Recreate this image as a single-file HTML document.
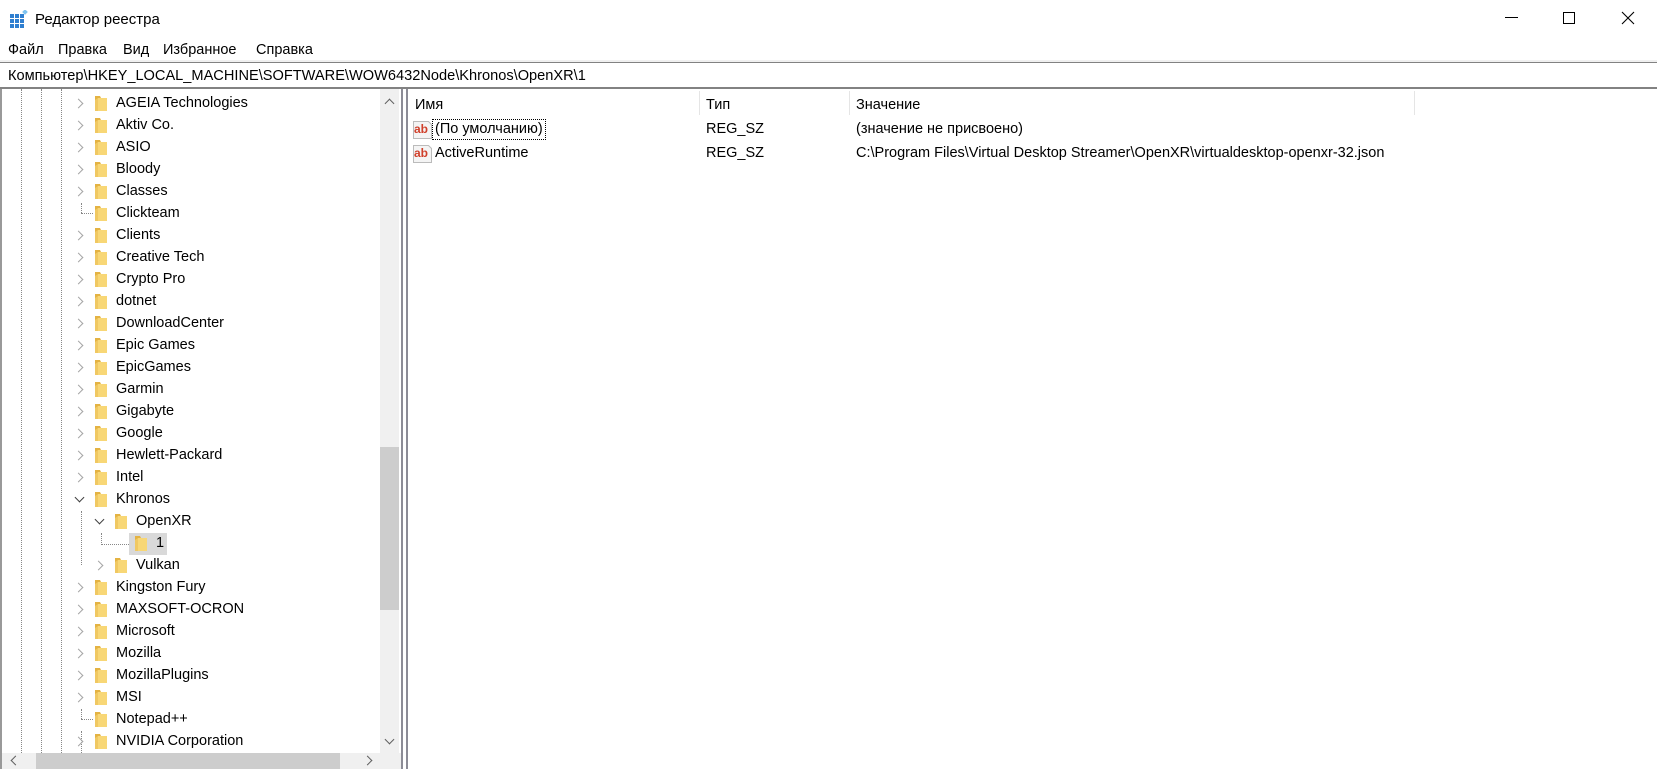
<!DOCTYPE html>
<html><head><meta charset="utf-8"><style>
*{margin:0;padding:0;box-sizing:border-box}
body{width:1657px;height:769px;overflow:hidden;background:#fff;font-family:"Liberation Sans",sans-serif;font-size:14.5px;color:#000;position:relative}
.a{position:absolute;white-space:nowrap}
.w{position:absolute;left:0;width:1657px;height:0}
.r{position:absolute;height:22px;line-height:22px;white-space:nowrap}
.chev{position:absolute;width:7px;height:7px;border-right:1.5px solid #a6a6a6;border-bottom:1.5px solid #a6a6a6;transform:rotate(-45deg)}
.dn{border-color:#404040;transform:rotate(45deg)}
.fd{position:absolute;width:12px;height:16px}
.vd{position:absolute;width:0;border-left:1px dotted #888}
.hd{position:absolute;height:0;border-top:1px dotted #888}
</style></head><body>
<svg class="a" style="left:10px;top:10px" width="18" height="18" viewBox="0 0 18 18">
<g fill="#2f7fd0"><rect x="0" y="4" width="4" height="4"/><rect x="5" y="4" width="4" height="4"/><rect x="10" y="4" width="4" height="4"/><rect x="0" y="9" width="4" height="4"/><rect x="5" y="9" width="4" height="4"/><rect x="10" y="9" width="4" height="4"/><rect x="0" y="14" width="4" height="4"/><rect x="5" y="14" width="4" height="4"/><rect x="10" y="14" width="4" height="4"/></g>
<rect x="13" y="0" width="4" height="4" fill="#7fc3f0" transform="rotate(45 15 2)"/></svg>
<div class="a" style="left:35px;top:11px;font-size:15px">Редактор реестра</div>
<div class="a" style="left:1505px;top:17px;width:13px;border-top:1px solid #000"></div>
<div class="a" style="left:1563px;top:12px;width:12px;height:12px;border:1px solid #000"></div>
<svg class="a" style="left:1621px;top:11px" width="14" height="14"><path d="M1 1L13 13M13 1L1 13" stroke="#000" stroke-width="1.1"/></svg>
<div class="a" style="left:8px;top:42px">Файл</div>
<div class="a" style="left:58px;top:42px">Правка</div>
<div class="a" style="left:123px;top:42px">Вид</div>
<div class="a" style="left:163px;top:42px">Избранное</div>
<div class="a" style="left:256px;top:42px">Справка</div>
<div class="a" style="left:0;top:60px;width:1657px;height:2px;background:#f0f0f0"></div>
<div class="a" style="left:0;top:62px;width:1657px;height:1px;background:#828282"></div>
<div class="a" style="left:0;top:87px;width:1657px;height:2px;background:#828282"></div>
<div class="a" style="left:8px;top:68px;font-size:14.6px">Компьютер\HKEY_LOCAL_MACHINE\SOFTWARE\WOW6432Node\Khronos\OpenXR\1</div>
<div class="a" style="left:0;top:89px;width:2px;height:680px;background:#999"></div>
<div class="vd" style="left:21px;top:89px;height:664px"></div>
<div class="vd" style="left:41px;top:89px;height:664px"></div>
<div class="vd" style="left:61px;top:89px;height:664px"></div>
<div class="w" style="top:3px">
<div class="vd" style="left:81px;top:508px;height:54px"></div>
<div class="vd" style="left:81px;top:728px;height:22px"></div>
<div class="vd" style="left:101px;top:530px;height:12px"></div>
<div class="hd" style="left:101px;top:541px;width:30px"></div>
<div class="hd" style="left:81px;top:210px;width:12px"></div>
<div class="vd" style="left:81px;top:200px;height:10px"></div>
<div class="hd" style="left:81px;top:716px;width:12px"></div>
<div class="vd" style="left:81px;top:706px;height:10px"></div>
<div class="a" style="left:129px;top:530px;width:38px;height:22px;background:#d9d9d9"></div>
<svg width="0" height="0" style="position:absolute"><defs><g id="f"><path d="M0 1h5l1 2h6v13H0z" fill="#e4b343"/><path d="M3 3h9v13H3z" fill="#f8d776"/><path d="M3 3l-3 2v11h3z" fill="#f0c862"/></g></defs></svg>
<div class="chev" style="left:75px;top:97px"></div><svg class="fd" style="left:95px;top:92px"><use href="#f"/></svg><div class="r" style="left:116px;top:89px">AGEIA Technologies</div>
<div class="chev" style="left:75px;top:119px"></div><svg class="fd" style="left:95px;top:114px"><use href="#f"/></svg><div class="r" style="left:116px;top:111px">Aktiv Co.</div>
<div class="chev" style="left:75px;top:141px"></div><svg class="fd" style="left:95px;top:136px"><use href="#f"/></svg><div class="r" style="left:116px;top:133px">ASIO</div>
<div class="chev" style="left:75px;top:163px"></div><svg class="fd" style="left:95px;top:158px"><use href="#f"/></svg><div class="r" style="left:116px;top:155px">Bloody</div>
<div class="chev" style="left:75px;top:185px"></div><svg class="fd" style="left:95px;top:180px"><use href="#f"/></svg><div class="r" style="left:116px;top:177px">Classes</div>
<svg class="fd" style="left:95px;top:202px"><use href="#f"/></svg><div class="r" style="left:116px;top:199px">Clickteam</div>
<div class="chev" style="left:75px;top:229px"></div><svg class="fd" style="left:95px;top:224px"><use href="#f"/></svg><div class="r" style="left:116px;top:221px">Clients</div>
<div class="chev" style="left:75px;top:251px"></div><svg class="fd" style="left:95px;top:246px"><use href="#f"/></svg><div class="r" style="left:116px;top:243px">Creative Tech</div>
<div class="chev" style="left:75px;top:273px"></div><svg class="fd" style="left:95px;top:268px"><use href="#f"/></svg><div class="r" style="left:116px;top:265px">Crypto Pro</div>
<div class="chev" style="left:75px;top:295px"></div><svg class="fd" style="left:95px;top:290px"><use href="#f"/></svg><div class="r" style="left:116px;top:287px">dotnet</div>
<div class="chev" style="left:75px;top:317px"></div><svg class="fd" style="left:95px;top:312px"><use href="#f"/></svg><div class="r" style="left:116px;top:309px">DownloadCenter</div>
<div class="chev" style="left:75px;top:339px"></div><svg class="fd" style="left:95px;top:334px"><use href="#f"/></svg><div class="r" style="left:116px;top:331px">Epic Games</div>
<div class="chev" style="left:75px;top:361px"></div><svg class="fd" style="left:95px;top:356px"><use href="#f"/></svg><div class="r" style="left:116px;top:353px">EpicGames</div>
<div class="chev" style="left:75px;top:383px"></div><svg class="fd" style="left:95px;top:378px"><use href="#f"/></svg><div class="r" style="left:116px;top:375px">Garmin</div>
<div class="chev" style="left:75px;top:405px"></div><svg class="fd" style="left:95px;top:400px"><use href="#f"/></svg><div class="r" style="left:116px;top:397px">Gigabyte</div>
<div class="chev" style="left:75px;top:427px"></div><svg class="fd" style="left:95px;top:422px"><use href="#f"/></svg><div class="r" style="left:116px;top:419px">Google</div>
<div class="chev" style="left:75px;top:449px"></div><svg class="fd" style="left:95px;top:444px"><use href="#f"/></svg><div class="r" style="left:116px;top:441px">Hewlett-Packard</div>
<div class="chev" style="left:75px;top:471px"></div><svg class="fd" style="left:95px;top:466px"><use href="#f"/></svg><div class="r" style="left:116px;top:463px">Intel</div>
<div class="chev dn" style="left:76px;top:491px"></div><svg class="fd" style="left:95px;top:488px"><use href="#f"/></svg><div class="r" style="left:116px;top:485px">Khronos</div>
<div class="chev dn" style="left:96px;top:513px"></div><svg class="fd" style="left:115px;top:510px"><use href="#f"/></svg><div class="r" style="left:136px;top:507px">OpenXR</div>
<svg class="fd" style="left:135px;top:532px"><use href="#f"/></svg><div class="r" style="left:156px;top:529px">1</div>
<div class="chev" style="left:95px;top:559px"></div><svg class="fd" style="left:115px;top:554px"><use href="#f"/></svg><div class="r" style="left:136px;top:551px">Vulkan</div>
<div class="chev" style="left:75px;top:581px"></div><svg class="fd" style="left:95px;top:576px"><use href="#f"/></svg><div class="r" style="left:116px;top:573px">Kingston Fury</div>
<div class="chev" style="left:75px;top:603px"></div><svg class="fd" style="left:95px;top:598px"><use href="#f"/></svg><div class="r" style="left:116px;top:595px">MAXSOFT-OCRON</div>
<div class="chev" style="left:75px;top:625px"></div><svg class="fd" style="left:95px;top:620px"><use href="#f"/></svg><div class="r" style="left:116px;top:617px">Microsoft</div>
<div class="chev" style="left:75px;top:647px"></div><svg class="fd" style="left:95px;top:642px"><use href="#f"/></svg><div class="r" style="left:116px;top:639px">Mozilla</div>
<div class="chev" style="left:75px;top:669px"></div><svg class="fd" style="left:95px;top:664px"><use href="#f"/></svg><div class="r" style="left:116px;top:661px">MozillaPlugins</div>
<div class="chev" style="left:75px;top:691px"></div><svg class="fd" style="left:95px;top:686px"><use href="#f"/></svg><div class="r" style="left:116px;top:683px">MSI</div>
<svg class="fd" style="left:95px;top:708px"><use href="#f"/></svg><div class="r" style="left:116px;top:705px">Notepad++</div>
<div class="chev" style="left:75px;top:735px"></div><svg class="fd" style="left:95px;top:730px"><use href="#f"/></svg><div class="r" style="left:116px;top:727px">NVIDIA Corporation</div>
</div>
<div class="a" style="left:380px;top:89px;width:19px;height:664px;background:#f0f0f0"></div>
<div class="a" style="left:380px;top:447px;width:19px;height:163px;background:#cdcdcd"></div>
<div class="chev" style="left:386px;top:100px;transform:rotate(-135deg);border-color:#606060"></div>
<div class="chev" style="left:386px;top:736px;transform:rotate(45deg);border-color:#606060"></div>
<div class="a" style="left:2px;top:753px;width:398px;height:16px;background:#f0f0f0"></div>
<div class="a" style="left:36px;top:753px;width:304px;height:16px;background:#cdcdcd"></div>
<div class="chev" style="left:12px;top:757px;transform:rotate(135deg);border-color:#606060"></div>
<div class="chev" style="left:364px;top:757px;border-color:#606060"></div>
<div class="a" style="left:399px;top:753px;width:4px;height:16px;background:#f0f0f0"></div>
<div class="a" style="left:401px;top:89px;width:2px;height:680px;background:#8c8c96"></div>
<div class="a" style="left:406px;top:89px;width:2px;height:680px;background:#8c8c96"></div>
<div class="a" style="left:415px;top:97px">Имя</div>
<div class="a" style="left:706px;top:97px">Тип</div>
<div class="a" style="left:856px;top:97px">Значение</div>
<div class="a" style="left:699px;top:91px;width:1px;height:24px;background:#e5e5e5"></div>
<div class="a" style="left:849px;top:91px;width:1px;height:24px;background:#e5e5e5"></div>
<div class="a" style="left:1414px;top:91px;width:1px;height:24px;background:#e5e5e5"></div>
<svg class="a" style="left:413px;top:121px" width="20" height="18"><path d="M0.5 0.5h15l3 3v14h-18z" fill="#f4f4f4" stroke="#bbb"/><text x="1" y="12" font-family="Liberation Sans" font-weight="bold" font-size="12" fill="#d0402b">ab</text></svg>
<div class="a" style="left:432px;top:119px;height:21px;padding:1px 2px;border:1px dotted #000;line-height:17px">(По умолчанию)</div>
<div class="a" style="left:706px;top:121px">REG_SZ</div>
<div class="a" style="left:856px;top:121px">(значение не присвоено)</div>
<svg class="a" style="left:413px;top:145px" width="20" height="18"><path d="M0.5 0.5h15l3 3v14h-18z" fill="#f4f4f4" stroke="#bbb"/><text x="1" y="12" font-family="Liberation Sans" font-weight="bold" font-size="12" fill="#d0402b">ab</text></svg>
<div class="a" style="left:435px;top:145px">ActiveRuntime</div>
<div class="a" style="left:706px;top:145px">REG_SZ</div>
<div class="a" style="left:856px;top:145px">C:\Program Files\Virtual Desktop Streamer\OpenXR\virtualdesktop-openxr-32.json</div>
</body></html>
